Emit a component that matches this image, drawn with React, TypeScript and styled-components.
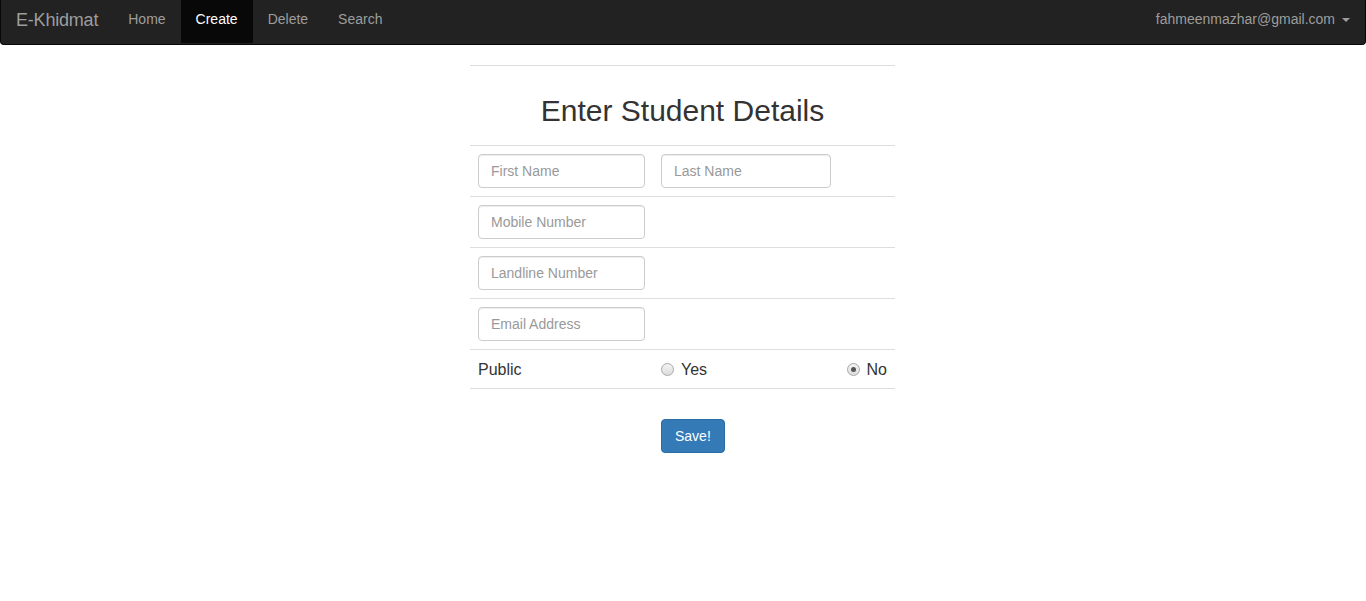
import React from "react";
import styled, { createGlobalStyle } from "styled-components";

const Global = createGlobalStyle`
  html, body { margin: 0; padding: 0; background: #fff; }
  body {
    font-family: "Liberation Sans", Arial, Helvetica, sans-serif;
    font-size: 14px;
    line-height: 1.42857;
    color: #333;
  }
  * { box-sizing: border-box; }
`;

const Navbar = styled.nav`
  display: flex;
  align-items: stretch;
  height: 45px;
  background: #222;
  border: 1px solid #080808;
  border-top: none;
  border-radius: 0 0 4px 4px;
  padding: 0 15px 0 0;
`;

const Brand = styled.a`
  display: block;
  padding: 10px 15px 0 15px;
  font-size: 18px;
  letter-spacing: -0.2px;
  line-height: 20px;
  color: #9d9d9d;
  text-decoration: none;
`;

const NavList = styled.ul`
  display: flex;
  list-style: none;
  margin: 0;
  padding: 0;
`;

const NavLink = styled.a<{ $active?: boolean }>`
  display: block;
  height: 43px;
  padding: 9px 15px 0 15px;
  line-height: 20px;
  font-size: 14px;
  color: ${(p) => (p.$active ? "#fff" : "#9d9d9d")};
  background: ${(p) => (p.$active ? "#080808" : "transparent")};
  text-decoration: none;
`;

const Spacer = styled.div`
  flex: 1;
`;

const UserMenu = styled.a`
  display: flex;
  align-items: flex-start;
  padding: 9px 0 0 0;
  line-height: 20px;
  color: #9d9d9d;
  text-decoration: none;
  gap: 7px;
`;

const Caret = styled.span`
  display: inline-block;
  width: 0;
  height: 0;
  margin-top: 9px;
  border-top: 4px solid #9d9d9d;
  border-left: 4px solid transparent;
  border-right: 4px solid transparent;
`;

const Main = styled.main`
  width: 426px;
  margin: 20px auto 0 auto;
`;

const Table = styled.table`
  width: 425px;
  border-collapse: collapse;
  border-spacing: 0;
  border-top: 1px solid #ddd;
`;

const Row = styled.tr`
  border-bottom: 1px solid #ddd;
`;

const TitleCell = styled.td`
  padding: 27px 8px 16px 8px;
  text-align: center;
`;

const Title = styled.h2`
  margin: 0;
  font-size: 30px;
  font-weight: 500;
  line-height: 36px;
  color: #333;
`;

const Cell = styled.td<{ $w?: number; $right?: boolean }>`
  padding: 8px;
  vertical-align: middle;
  width: ${(p) => (p.$w ? `${p.$w}px` : "auto")};
  text-align: ${(p) => (p.$right ? "right" : "left")};
`;

const ChoiceCell = styled.td<{ $w?: number; $right?: boolean }>`
  padding: 9px 8px 7px 8px;
  vertical-align: middle;
  width: ${(p) => (p.$w ? `${p.$w}px` : "auto")};
  text-align: ${(p) => (p.$right ? "right" : "left")};
`;

const TextInput = styled.input<{ $w: number }>`
  display: block;
  width: ${(p) => p.$w}px;
  height: 34px;
  padding: 6px 12px;
  font-family: inherit;
  font-size: 14px;
  line-height: 20px;
  color: #555;
  background: #fff;
  border: 1px solid #ccc;
  border-radius: 4px;
  box-shadow: inset 0 1px 1px rgba(0, 0, 0, 0.075);
  &::placeholder {
    color: #999;
  }
`;

const Label = styled.span`
  display: block;
  font-size: 16px;
  line-height: 22px;
  color: #333;
`;

const RadioLabel = styled.label`
  display: inline-flex;
  align-items: center;
  vertical-align: top;
  gap: 7px;
  font-size: 16px;
  line-height: 22px;
  color: #333;
`;

const Radio = styled.span<{ $checked?: boolean }>`
  position: relative;
  display: inline-block;
  width: 13px;
  height: 13px;
  border-radius: 50%;
  border: 1px solid #a9a9a9;
  background: linear-gradient(#f4f4f4, #dcdcdc);
  margin-top: -1px;
  &::after {
    content: "";
    display: ${(p) => (p.$checked ? "block" : "none")};
    position: absolute;
    left: 3px;
    top: 3px;
    width: 5px;
    height: 5px;
    border-radius: 50%;
    background: #555;
  }
`;

const Actions = styled.div`
  padding: 30px 0 0 191px;
`;

const SaveButton = styled.button`
  height: 34px;
  padding: 6px 13px;
  font-family: inherit;
  font-size: 14px;
  line-height: 20px;
  color: #fff;
  background: #337ab7;
  border: 1px solid #2e6da4;
  border-radius: 4px;
`;

export default function App() {
  return (
    <>
      <Global />
      <Navbar>
        <Brand href="#">E-Khidmat</Brand>
        <NavList>
          <li><NavLink href="#">Home</NavLink></li>
          <li><NavLink href="#" $active>Create</NavLink></li>
          <li><NavLink href="#">Delete</NavLink></li>
          <li><NavLink href="#">Search</NavLink></li>
        </NavList>
        <Spacer />
        <UserMenu href="#">
          fahmeenmazhar@gmail.com
          <Caret />
        </UserMenu>
      </Navbar>
      <Main>
        <Table>
          <tbody>
            <Row>
              <TitleCell colSpan={3}>
                <Title>Enter Student Details</Title>
              </TitleCell>
            </Row>
            <Row>
              <Cell $w={183}><TextInput $w={167} placeholder="First Name" /></Cell>
              <Cell colSpan={2}><TextInput $w={170} placeholder="Last Name" /></Cell>
            </Row>
            <Row>
              <Cell colSpan={3}><TextInput $w={167} placeholder="Mobile Number" /></Cell>
            </Row>
            <Row>
              <Cell colSpan={3}><TextInput $w={167} placeholder="Landline Number" /></Cell>
            </Row>
            <Row>
              <Cell colSpan={3}><TextInput $w={167} placeholder="Email Address" /></Cell>
            </Row>
            <Row>
              <ChoiceCell $w={183}><Label>Public</Label></ChoiceCell>
              <ChoiceCell><RadioLabel><Radio />Yes</RadioLabel></ChoiceCell>
              <ChoiceCell $right><RadioLabel><Radio $checked />No</RadioLabel></ChoiceCell>
            </Row>
          </tbody>
        </Table>
        <Actions>
          <SaveButton>Save!</SaveButton>
        </Actions>
      </Main>
    </>
  );
}
